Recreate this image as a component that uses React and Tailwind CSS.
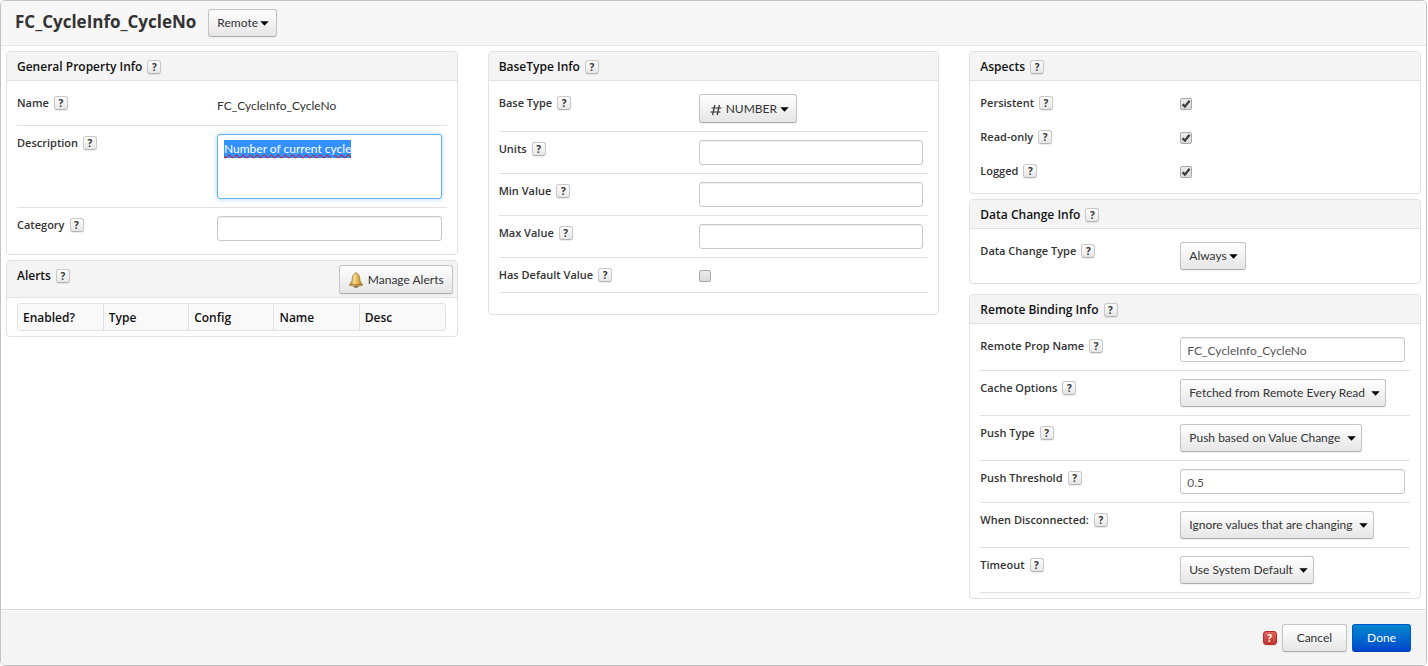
import { useEffect, useId, useRef } from "react";

const raised =
  "rounded-[3px] border border-[#c4c4c4] border-b-[#adadad] bg-linear-to-b from-white to-[#e6e6e6] shadow-[0_1px_2px_rgba(0,0,0,0.06)]";

function Help({ topic, tone = "light" }) {
  const look =
    tone === "danger"
      ? "border-[#b32c28] bg-linear-to-b from-[#e65f5a] to-[#bd362f] text-white"
      : "border-[#c8c8c8] border-b-[#b4b4b4] bg-linear-to-b from-white to-[#e6e6e6] text-[#333]";
  return (
    <button
      type="button"
      aria-label={`Help: ${topic}`}
      className={`flex h-[14px] w-[14px] shrink-0 items-center justify-center rounded-[3px] border font-['Open_Sans',sans-serif] text-[10px] leading-none font-bold shadow-[0_1px_1px_rgba(0,0,0,0.08)] ${look}`}
    >
      ?
    </button>
  );
}

function Panel({ title, action, className = "", children }) {
  return (
    <section className={`rounded-[4px] border border-[#e1e1e1] bg-white ${className}`}>
      <header className="flex items-start justify-between rounded-t-[3px] border-b border-[#e1e1e1] bg-[#f4f4f4] pl-[10px] pr-1">
        <div className="flex h-[28px] items-center gap-[5px] pt-[2px]">
          <h2 className="font-['Open_Sans',sans-serif] text-[12px] font-semibold text-[#111]">
            {title}
          </h2>
          <Help topic={title} />
        </div>
        {action}
      </header>
      {children}
    </section>
  );
}

function Row({ label, htmlFor, line = true, children }) {
  return (
    <div
      className={`grid grid-cols-[200px_minmax(0,1fr)] items-start py-2 pr-[5px] ${
        line ? "border-b border-[#e1e1e1]" : ""
      }`}
    >
      <div className="flex h-[18px] items-center gap-[5px]">
        <label
          htmlFor={htmlFor}
          className="font-['Open_Sans',sans-serif] text-[11px] font-semibold text-[#333]"
        >
          {label}
        </label>
        <Help topic={label} />
      </div>
      {children}
    </div>
  );
}

function Dropdown({ id, value, label, icon, compact = false, pad = "pl-2", height = "h-[28px]" }) {
  return (
    <div className="relative w-max">
      {icon}
      <select
        id={id}
        aria-label={label}
        defaultValue={value}
        className={`block appearance-none text-[12px] text-[#333] ${raised} ${pad} ${height} ${
          compact ? "pr-[18px]" : "pr-5"
        }`}
      >
        <option>{value}</option>
      </select>
      <svg
        className={`pointer-events-none absolute top-1/2 -mt-[2px] h-[5px] w-[9px] ${
          compact ? "right-[8px]" : "right-[6px]"
        }`}
        viewBox="0 0 9 5"
        aria-hidden="true"
      >
        <path d="M0.3 0.3h8.4L4.5 4.7z" fill="#000" />
      </svg>
    </div>
  );
}

function DropdownRow({ label, line, ...rest }) {
  const id = useId();
  return (
    <Row label={label} htmlFor={id} line={line}>
      <Dropdown id={id} {...rest} />
    </Row>
  );
}

function TextRow({ label, value = "", line }) {
  const id = useId();
  return (
    <Row label={label} htmlFor={id} line={line}>
      <input
        id={id}
        type="text"
        defaultValue={value}
        className="h-[25px] w-full rounded-[3px] border border-[#c8c8c8] bg-white px-[6px] pt-[2px] text-[12px] text-[#555] shadow-[inset_0_1px_1px_rgba(0,0,0,0.06)] outline-none"
      />
    </Row>
  );
}

function CheckRow({ label, checked = false, line = true }) {
  const id = useId();
  return (
    <Row label={label} htmlFor={id} line={line}>
      <div className="grid h-[18px] w-3 items-end pb-[2px]">
        <input
          id={id}
          type="checkbox"
          defaultChecked={checked}
          className="peer col-start-1 row-start-1 m-0 h-3 w-3 appearance-none rounded-[2px] border border-[#a8a8a8] bg-linear-to-b from-[#ececec] to-[#dadada]"
        />
        <svg
          viewBox="0 0 12 12"
          className="pointer-events-none invisible col-start-1 row-start-1 h-3 w-3 peer-checked:visible"
          aria-hidden="true"
        >
          <path d="M2.6 6.2 4.9 8.6 9.6 2.8" fill="none" stroke="#3c3c3c" strokeWidth="2.3" />
        </svg>
      </div>
    </Row>
  );
}

function Bell() {
  return (
    <svg viewBox="0 0 16 16" className="h-4 w-4" aria-hidden="true">
      <defs>
        <linearGradient id="bell" x1="0" x2="1" y1="0" y2="0">
          <stop offset="0" stopColor="#b98a3a" />
          <stop offset="0.38" stopColor="#f6dc8c" />
          <stop offset="0.65" stopColor="#dfae4c" />
          <stop offset="1" stopColor="#a8762c" />
        </linearGradient>
      </defs>
      <ellipse cx="8" cy="14.2" rx="2.2" ry="1.5" fill="#6f6048" />
      <path
        d="M8 .8c-.9 0-1.200.500-1.300 1.100C4.900 2.600 4.300 4.500 4.200 6.500 4.100 9 3.500 10.500 1.700 12.200c-.5.6-.3 1.300.5 1.400 3.800.6 7.800.6 11.600 0 .8-.1 1-.8.5-1.400C12.500 10.500 11.900 9 11.800 6.500 11.700 4.500 11.100 2.600 9.300 1.900 9.200 1.300 8.900.8 8 .8z"
        fill="url(#bell)"
        stroke="#9a6f30"
        strokeWidth=".7"
      />
      <path d="M2.900 12.100c3.300.7 6.900.7 10.200 0" fill="none" stroke="#96692a" strokeWidth=".8" />
    </svg>
  );
}

function NumberIcon() {
  return (
    <svg
      viewBox="0 0 12 12"
      className="pointer-events-none absolute top-[10px] left-[11px] h-3 w-3"
      aria-hidden="true"
    >
      <path
        d="M4.800 1 2.600 11M9.400 1 7.200 11M1.500 4h10M.5 8h10"
        fill="none"
        stroke="#333"
        strokeWidth="1.2"
      />
    </svg>
  );
}

function DescriptionRow() {
  const field = useRef(null);
  useEffect(() => {
    field.current.focus();
    field.current.select();
  }, []);
  return (
    <Row label="Description" htmlFor="description">
      <textarea
        id="description"
        ref={field}
        spellCheck="false"
        defaultValue="Number of current cycle"
        className="block h-[65px] w-full resize-none rounded-[3px] border border-[#66afe9] bg-white px-[6px] py-[5px] text-[12px] leading-[18px] text-[#555] shadow-[0_0_5px_rgba(102,175,233,0.5)] outline-none selection:bg-[#3390ff] selection:text-white selection:underline selection:decoration-red-600 selection:decoration-wavy selection:decoration-1"
      />
    </Row>
  );
}

const alertColumns = ["Enabled?", "Type", "Config", "Name", "Desc"];

export default function App() {
  return (
    <div className="mr-px flex min-h-screen flex-col rounded-[5px] border border-[#c3c3c3] bg-white font-[Lato,'Open_Sans',sans-serif] text-[12px] text-[#333]">
      <header className="flex h-[45px] items-center gap-3 rounded-t-[4px] border-b border-[#e5e5e5] bg-[#f7f7f7] pl-[14px]">
        <h1 className="pb-[3px] font-['Open_Sans',sans-serif] text-[17px] leading-6 font-bold">
          FC_CycleInfo_CycleNo
        </h1>
        <Dropdown label="Property source" value="Remote" compact />
      </header>

      <main className="grid flex-1 grid-cols-3 items-start gap-[30px] px-[5px] pt-[5px] pb-[10px]">
        <div className="flex flex-col gap-[5px]">
          <Panel title="General Property Info">
            <div className="px-[10px] py-[5px]">
              <Row label="Name">
                <div className="flex h-[23px] items-center">FC_CycleInfo_CycleNo</div>
              </Row>
              <DescriptionRow />
              <TextRow label="Category" line={false} />
            </div>
          </Panel>

          <Panel
            title="Alerts"
            action={
              <button
                type="button"
                className={`mt-1 mb-[3px] flex h-[29px] items-center gap-1 px-2 text-[12px] ${raised}`}
              >
                <Bell />
                Manage Alerts
              </button>
            }
          >
            <div className="px-[10px] py-[5px]">
              <div className="mr-px rounded-[3px] border border-[#e1e1e1] bg-[#f9f9f9]">
                <table className="w-full table-fixed text-left font-['Open_Sans',sans-serif]">
                  <thead>
                    <tr className="divide-x divide-[#e1e1e1]">
                      {alertColumns.map((name) => (
                        <th key={name} className="h-[26px] px-[5px] pt-[2px] font-semibold text-[#111]">
                          {name}
                        </th>
                      ))}
                    </tr>
                  </thead>
                </table>
              </div>
            </div>
          </Panel>
        </div>

        <Panel title="BaseType Info">
          <div className="px-[10px] pt-[5px] pb-[21px]">
            <DropdownRow
              label="Base Type"
              value="NUMBER"
              icon={<NumberIcon />}
              compact
              pad="pl-[26px]"
              height="h-[29px]"
            />
            <TextRow label="Units" />
            <TextRow label="Min Value" />
            <TextRow label="Max Value" />
            <CheckRow label="Has Default Value" />
          </div>
        </Panel>

        <div className="flex flex-col">
          <Panel title="Aspects" className="mb-[5px]">
            <div className="px-[10px] py-[5px]">
              <CheckRow label="Persistent" checked line={false} />
              <CheckRow label="Read-only" checked line={false} />
              <CheckRow label="Logged" checked line={false} />
            </div>
          </Panel>

          <Panel title="Data Change Info" className="mb-[10px]">
            <div className="px-[10px] py-[5px]">
              <DropdownRow label="Data Change Type" value="Always" compact line={false} />
            </div>
          </Panel>

          <Panel title="Remote Binding Info">
            <div className="px-[10px] py-[5px]">
              <TextRow label="Remote Prop Name" value="FC_CycleInfo_CycleNo" />
              <DropdownRow label="Cache Options" value="Fetched from Remote Every Read" />
              <DropdownRow label="Push Type" value="Push based on Value Change" />
              <TextRow label="Push Threshold" value="0.5" />
              <DropdownRow label="When Disconnected:" value="Ignore values that are changing" />
              <DropdownRow label="Timeout" value="Use System Default" />
            </div>
          </Panel>
        </div>
      </main>

      <footer className="flex h-[56px] items-center justify-end gap-[5px] rounded-b-[4px] border-t border-[#d9d9d9] bg-[#f4f4f4] pr-[15px] shadow-[inset_0_1px_0_#fff]">
        <Help topic="Property editor" tone="danger" />
        <button type="button" className={`h-[28px] px-[14px] text-[12px] ${raised}`}>
          Cancel
        </button>
        <button
          type="button"
          className="h-[28px] rounded-[3px] border border-[#0055cc] border-b-[#003fb0] bg-linear-to-b from-[#0088cc] to-[#0044cc] px-[14px] text-[12px] text-white"
        >
          Done
        </button>
      </footer>
    </div>
  );
}
